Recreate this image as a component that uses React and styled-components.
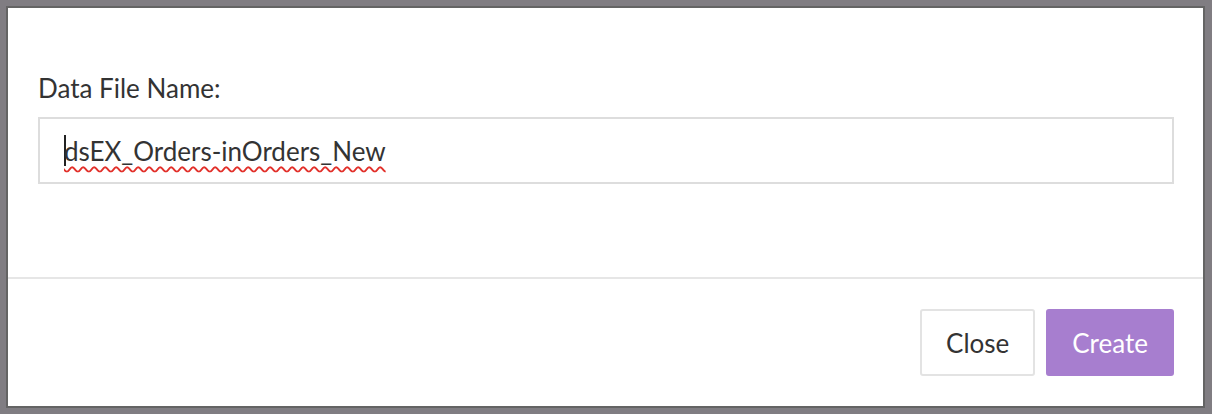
import React from 'react';
import styled, { createGlobalStyle } from 'styled-components';

const GlobalStyle = createGlobalStyle`
  html, body {
    margin: 0;
    padding: 0;
    background: #807d82;
  }
  body {
    font-family: 'Lato', 'Open Sans', sans-serif;
  }
`;

const Backdrop = styled.div`
  width: 1212px;
  height: 414px;
  box-sizing: border-box;
  padding: 6px 7px 6px 6px;
  background: #807d82;
`;

const Dialog = styled.div`
  height: 100%;
  box-sizing: border-box;
  border: 2px solid #646464;
  background: #fff;
  display: flex;
  flex-direction: column;
`;

const Body = styled.div`
  flex: 1;
  padding: 65px 29px 0 30px;
  border-bottom: 2px solid #e6e6e6;
`;

const Label = styled.label`
  display: block;
  font-size: 26px;
  color: #333;
  margin-bottom: 14px;
  line-height: 30px;
`;

const Field = styled.div`
  height: 67px;
  box-sizing: border-box;
  border: 2px solid #dddddd;
  display: flex;
  align-items: center;
  padding-left: 24px;
  font-size: 26px;
  color: #333;
`;

const Caret = styled.span`
  display: inline-block;
  width: 2px;
  height: 31px;
  background: #222;
  margin-right: -2px;
`;

const Misspelled = styled.span`
  text-decoration: underline wavy #e2302a;
  text-decoration-thickness: 1.5px;
  text-underline-offset: 5px;
`;

const Footer = styled.div`
  display: flex;
  justify-content: flex-end;
  gap: 11px;
  padding: 30px 29px 30px 0;
`;

const Button = styled.button`
  height: 67px;
  padding: 0 24px;
  font-family: 'Lato', 'Open Sans', sans-serif;
  font-size: 26px;
  border-radius: 3px;
  border: 2px solid ${p => (p.$primary ? '#a77ecf' : '#e3e3e3')};
  background: ${p => (p.$primary ? '#a77ecf' : '#fff')};
  color: ${p => (p.$primary ? '#fff' : '#333')};
  cursor: pointer;
`;

export default function App() {
  return (
    <>
      <GlobalStyle />
      <Backdrop>
        <Dialog>
          <Body>
            <Label>Data File Name:</Label>
            <Field>
              <Caret />
              <Misspelled>dsEX_Orders-inOrders_New</Misspelled>
            </Field>
          </Body>
          <Footer>
            <Button>Close</Button>
            <Button $primary>Create</Button>
          </Footer>
        </Dialog>
      </Backdrop>
    </>
  );
}
